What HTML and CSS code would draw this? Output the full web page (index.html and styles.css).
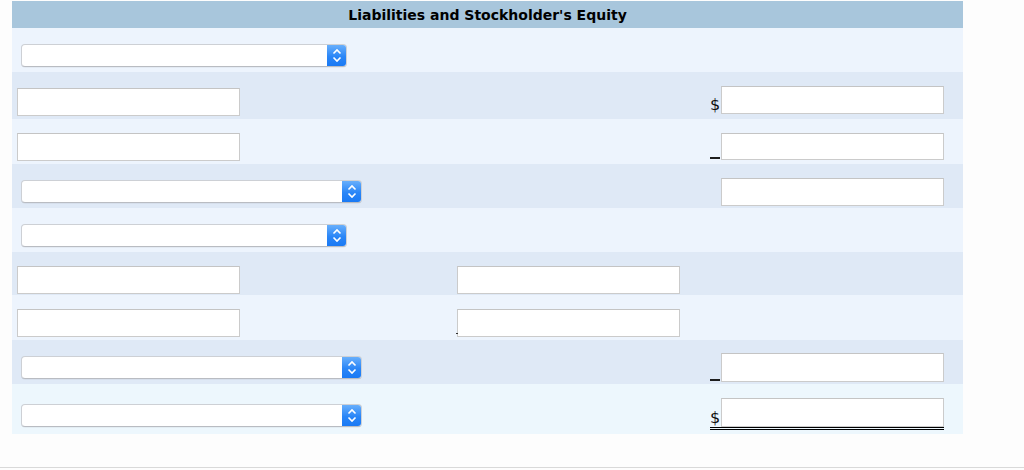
FILE: index.html
```html
<!DOCTYPE html>
<html>
<head>
<meta charset="utf-8">
<link rel="stylesheet" href="styles.css">
</head>
<body>
<div class="page">
  <div class="sheet">
    <div class="head">Liabilities and Stockholder's Equity</div>

    <div class="row light h44">
      <div class="c1"><div class="sel short"><span class="btn"><svg viewBox="0 0 20 23" width="20" height="23"><path d="M6.5 9.5 L10 6 L13.5 9.5 M6.5 13.5 L10 17 L13.5 13.5" fill="none" stroke="#fff" stroke-width="1.6"/></svg></span></div></div>
      <div class="c2"></div>
      <div class="c3"></div>
    </div>

    <div class="row dark h47">
      <div class="c1"><div class="inp"></div></div>
      <div class="c2"></div>
      <div class="c3 hi2"><span class="mark dollar">$</span><div class="inp"></div></div>
    </div>

    <div class="row light h45">
      <div class="c1"><div class="inp"></div></div>
      <div class="c2"></div>
      <div class="c3 hi1"><span class="mark line"></span><div class="inp h27"></div></div>
    </div>

    <div class="row dark h44">
      <div class="c1"><div class="sel long"><span class="btn"><svg viewBox="0 0 20 23" width="20" height="23"><path d="M6.5 9.5 L10 6 L13.5 9.5 M6.5 13.5 L10 17 L13.5 13.5" fill="none" stroke="#fff" stroke-width="1.6"/></svg></span></div></div>
      <div class="c2"></div>
      <div class="c3 lo1"><span class="mark"></span><div class="inp"></div></div>
    </div>

    <div class="row light h44">
      <div class="c1"><div class="sel short"><span class="btn"><svg viewBox="0 0 20 23" width="20" height="23"><path d="M6.5 9.5 L10 6 L13.5 9.5 M6.5 13.5 L10 17 L13.5 13.5" fill="none" stroke="#fff" stroke-width="1.6"/></svg></span></div></div>
      <div class="c2"></div>
      <div class="c3"></div>
    </div>

    <div class="row dark h43">
      <div class="c1 lo2"><div class="inp"></div></div>
      <div class="c2 lo2"><span class="tick"></span><div class="inp blank"></div></div>
      <div class="c3"></div>
    </div>

    <div class="row light h45">
      <div class="c1"><div class="inp"></div></div>
      <div class="c2"><span class="tick dot"></span><div class="inp"></div></div>
      <div class="c3"></div>
    </div>

    <div class="row dark h44">
      <div class="c1"><div class="sel long"><span class="btn"><svg viewBox="0 0 20 23" width="20" height="23"><path d="M6.5 9.5 L10 6 L13.5 9.5 M6.5 13.5 L10 17 L13.5 13.5" fill="none" stroke="#fff" stroke-width="1.6"/></svg></span></div></div>
      <div class="c2"></div>
      <div class="c3 lo1"><span class="mark line"></span><div class="inp h29"></div></div>
    </div>

    <div class="row cyan h50">
      <div class="c1"><div class="sel long last"><span class="btn"><svg viewBox="0 0 20 23" width="20" height="23"><path d="M6.5 9.5 L10 6 L13.5 9.5 M6.5 13.5 L10 17 L13.5 13.5" fill="none" stroke="#fff" stroke-width="1.6"/></svg></span></div></div>
      <div class="c2"></div>
      <div class="c3"><div class="total"><span class="mark dollar">$</span><div class="inp h29"></div></div></div>
    </div>
  </div>
  <div class="rule"></div>
</div>
</body>
</html>
```

FILE: styles.css
```css
html, body {
  margin: 0;
  padding: 0;
  background: #fdfdfd;
}
.page {
  width: 1024px;
  height: 470px;
  padding-top: 1px;
  box-sizing: border-box;
  font-family: "DejaVu Sans", Verdana, sans-serif;
}
.sheet {
  margin-left: 12px;
  width: 951px;
}
.head {
  height: 27px;
  background: #a8c6dc;
  color: #000;
  font-weight: bold;
  font-size: 14px;
  line-height: 28px;
  text-align: center;
}
.row {
  display: grid;
  grid-template-columns: 445px 253px 253px;
  align-items: end;
  box-sizing: border-box;
  padding-bottom: 3px;
}
.light { background: #edf4fd; }
.dark { background: #dfe9f6; }
.cyan { background: #edf7fd; }
.h43 { height: 43px; }
.h44 { height: 44px; }
.h45 { height: 45px; }
.h47 { height: 47px; }
.h50 { height: 50px; }

.c1, .c2, .c3 {
  display: flex;
  align-items: flex-end;
}
.c1 { padding-left: 5px; }
.c2 { position: relative; }
.c3 { padding-right: 19px; justify-content: flex-start; }
.hi2 { margin-bottom: 2px; }
.hi1 { margin-bottom: 1px; }
.lo1 { margin-bottom: -1px; }
.lo2 { margin-bottom: -2px; }

.inp {
  width: 223px;
  height: 28px;
  box-sizing: border-box;
  background: #fff;
  border: 1px solid #cbcbcb;
  border-top-color: #c4c4c4;
}
.inp.h27 { height: 27px; }
.inp.h29 { height: 29px; }

.sel {
  margin-left: 4px;
  margin-bottom: 2px;
  height: 23px;
  box-sizing: border-box;
  background: #fff;
  border: 1px solid #cdd0d5;
  border-bottom-color: #b9bcc2;
  border-radius: 4px;
  display: flex;
  justify-content: flex-end;
  overflow: hidden;
  box-shadow: 0 0.5px 0.5px rgba(0,0,0,0.08);
}
.sel.last { margin-bottom: 4px; }
.sel.short { width: 326px; }
.sel.long { width: 341px; }
.btn {
  width: 20px;
  height: 23px;
  margin-top: -1px;
  margin-right: -1px;
  background: linear-gradient(#6db2fc, #2a86f7 55%, #1878f4);
  border-radius: 0 4px 4px 0;
  display: block;
}
.btn svg { display: block; }

.mark {
  width: 11px;
  flex: none;
  align-self: flex-end;
}
.dollar {
  font-family: "DejaVu Sans", Verdana, sans-serif;
  font-size: 16px;
  line-height: 18px;
  color: #111;
  text-align: left;
}
.line {
  height: 2px;
  background: #1d1d1d;
  margin-bottom: 1px;
  width: 10px;
  margin-right: 1px;
}
.tick {
  width: 0;
}
.tick.dot {
  position: absolute;
  left: -1px;
  bottom: 3px;
  width: 2px;
  height: 1px;
  background: #333;
}
.total {
  display: flex;
  align-items: flex-end;
  border-bottom: 3px double #000;
  margin-bottom: 1px;
}
.rule {
  margin-top: 33px;
  height: 1px;
  background: #d9d9d9;
}
```
